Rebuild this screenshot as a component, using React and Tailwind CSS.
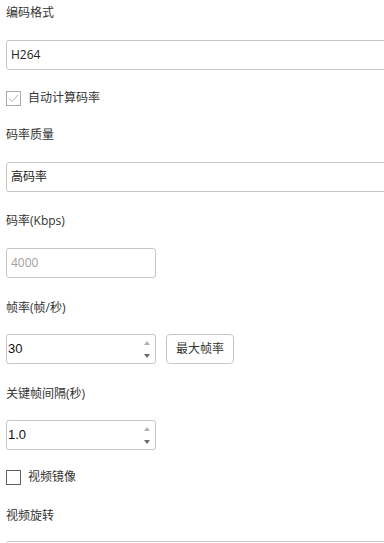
import { useState } from 'react';

const font = { fontFamily: '"Open Sans", "Noto Sans CJK SC", sans-serif' };

const Label = ({ children, className = '' }) => (
    <div className={`h-[18px] text-[12px] leading-[18px] text-[#333] ${className}`}>{children}</div>
);

const SelectBox = ({ value, className = '' }) => (
    <div className={`h-[30px] w-[calc(100%+30px)] rounded-[3px] border border-[#c6c6c6] bg-white pl-[4px] flex items-center text-[12px] text-[#222] ${className}`}>
        {value}
    </div>
);

const Spinner = () => (
    <div className="flex flex-col items-center justify-center gap-[9px] pr-[5px]">
        <svg width="6" height="4" viewBox="0 0 6 4"><path d="M3 0 L6 4 L0 4 Z" fill="#b0b0b0" /></svg>
        <svg width="6" height="4" viewBox="0 0 6 4"><path d="M0 0 L6 0 L3 4 Z" fill="#6a6a6a" /></svg>
    </div>
);

const NumberBox = ({ value, className = '' }) => (
    <div className={`h-[30px] w-[150px] rounded-[3px] border border-[#c6c6c6] bg-white flex items-center justify-between ${className}`}>
        <span className="pl-[1px] text-[13px] text-[#111]" style={{ fontFamily: '"Liberation Sans", Arial, sans-serif' }}>{value}</span>
        <Spinner />
    </div>
);

const Check = ({ checked, label, className = '' }) => (
    <div className={`h-[18px] flex items-center ${className}`}>
        {checked ? (
            <div className="h-[15px] w-[15px] border border-[#a8a8a8] bg-white flex items-center justify-center">
                <svg width="11" height="9" viewBox="0 0 11 9"><path d="M1 4.5 L4 7.5 L10 1" fill="none" stroke="#b4b4b4" strokeWidth="1" /></svg>
            </div>
        ) : (
            <div className="h-[15px] w-[15px] border border-[#5e5e5e] bg-white" />
        )}
        <span className="ml-[7px] text-[12px] leading-[18px] text-[#333]">{label}</span>
    </div>
);

const App = () => {
    const [autoRate] = useState(true);

    return (
        <div className="h-[543px] w-full overflow-hidden bg-white pl-[6px]" style={font}>
            <Label className="mt-[4px]">编码格式</Label>
            <SelectBox value="H264" className="mt-[18px]" />

            <Check checked={autoRate} label="自动计算码率" className="mt-[19px]" />

            <Label className="mt-[19px]">码率质量</Label>
            <SelectBox value="高码率" className="mt-[18px]" />

            <Label className="mt-[20px]">码率(Kbps)</Label>
            <div className="mt-[18px] h-[30px] w-[150px] rounded-[3px] border border-[#c6c6c6] bg-white pl-[4px] flex items-center text-[12px] text-[#a0a0a0]">
                4000
            </div>

            <Label className="mt-[21px]">帧率(帧/秒)</Label>
            <div className="mt-[17px] flex items-center gap-[10px]">
                <NumberBox value="30" />
                <button className="h-[30px] w-[68px] rounded-[4px] border border-[#c6c6c6] bg-white text-[12px] text-[#333]">最大帧率</button>
            </div>

            <Label className="mt-[21px]">关键帧间隔(秒)</Label>
            <NumberBox value="1.0" className="mt-[17px]" />

            <Check checked={false} label="视频镜像" className="mt-[18px]" />

            <Label className="mt-[21px]">视频旋转</Label>
            <SelectBox value="" className="mt-[16px]" />
        </div>
    );
};

export default App;
